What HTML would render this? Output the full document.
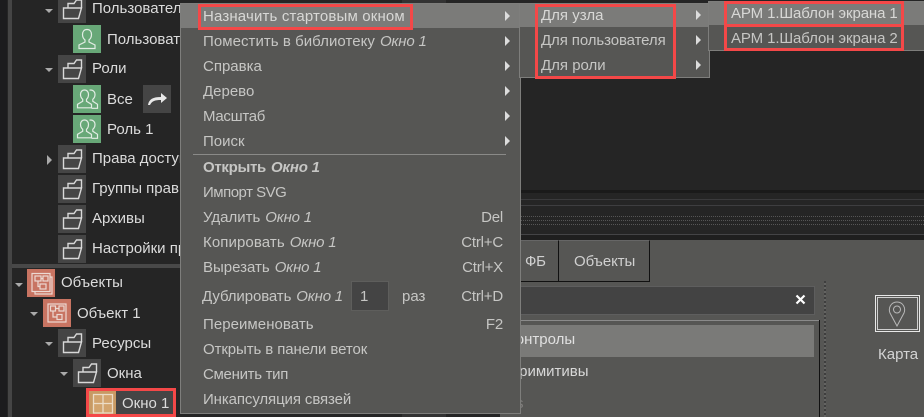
<!DOCTYPE html>
<html lang="ru"><head><meta charset="utf-8"><title>Меню</title>
<style>
html,body{margin:0;padding:0;background:#252525}
#r{position:relative;width:924px;height:417px;overflow:hidden;background:#252525;font:15px "Liberation Sans",sans-serif;color:#dcdcdc}
#r div,#r span.a,#r svg{position:absolute}
.t{white-space:nowrap;line-height:18px;height:18px;margin-top:1px}
.b{width:28px;height:28px;background:#454545}
.b svg,.g svg,.o svg,.w svg{left:0;top:0;width:28px;height:28px}
.g{width:28px;height:28px;background:#68a878}
.o{width:28px;height:28px;background:#c87462}
.m{color:#c6c6c4}
.m i{margin-left:5px;font-style:italic;letter-spacing:-.2px}
.ar{width:0;height:0;border-left:5px solid #dcdcdc;border-top:5px solid transparent;border-bottom:5px solid transparent}
.red{border:3px solid #f44848;box-sizing:border-box}
.tg{width:0;height:0;border-top:4px solid #aaa;border-left:4px solid transparent;border-right:4px solid transparent}
.tr{width:0;height:0;border-left:5px solid #aaa;border-top:5px solid transparent;border-bottom:5px solid transparent}
.k{text-align:right;width:80px;left:423px;letter-spacing:-.2px}
.d{left:520px;width:404px;height:0;border-top:1px dotted #555}
</style></head><body><div id="r">
<svg width="0" height="0" style="position:absolute"><defs>
<symbol id="f" viewBox="0 0 28 28"><path d="M5.500 23.500 V13 H23.500 L20.500 23.500 Z M10 13 V8.500 H16 L18.500 5 H23.500 V13" fill="none" stroke="#d8d8d8" stroke-width="1.400"/></symbol>
<symbol id="u" viewBox="0 0 28 28"><path d="M14 4.500 c-3 0 -4.500 2.200 -4.500 5 c0 2.600 1.300 4.500 2.500 5.500 v2 l-6 3 v3.500 h16 v-3.500 l-6 -3 v-2 c1.200 -1 2.500 -2.900 2.500 -5.500 c0 -2.800 -1.500 -5 -4.500 -5 z" fill="none" stroke="#e2ece4" stroke-width="1.200"/></symbol>
<symbol id="uu" viewBox="0 0 28 28"><path d="M11.500 5 c-2.500 0 -4 2 -4 4.500 c0 2.300 1 3.800 2.200 4.800 v2 l-5.200 3 v3.500 h14 v-3.500 l-5 -3 v-2 c1.200 -1 2 -2.500 2 -4.800 c0 -2.500 -1.500 -4.500 -4 -4.500 z M16.500 5.200 c2.800 -.8 5.500 1.200 5.500 4.300 c0 2.300 -1 3.800 -2.200 4.800 v2 l4.700 3 v4 h-6" fill="none" stroke="#e2ece4" stroke-width="1.200"/></symbol>
<symbol id="ob" viewBox="0 0 28 28"><g fill="none" stroke="#ecd9d2" stroke-width="1.200"><rect x="5" y="4.500" width="18" height="18"/><rect x="8" y="7" width="6" height="5"/><rect x="16" y="7" width="5" height="5"/><rect x="13" y="15" width="6" height="5"/><path d="M14 9.500H16M11 12V17.500H13M23 8H25V25H8V22.500"/></g></symbol>
<symbol id="ob2" viewBox="0 0 28 28"><g fill="none" stroke="#ecd9d2" stroke-width="1.200"><rect x="5" y="5" width="18" height="18"/><rect x="7.500" y="7" width="5" height="5"/><rect x="16" y="7" width="5" height="5"/><rect x="14" y="15.500" width="5" height="5"/><path d="M12.500 9.500H16M10 12V18H14"/></g></symbol>
</defs></svg>

<!-- left chrome -->
<div style="left:0;top:0;width:7px;height:417px;background:#1c1c1e"></div>
<div style="left:8px;top:0;width:4px;height:417px;background:#454545"></div>
<div style="left:12px;top:264px;width:170px;height:4px;background:#484848"></div>

<!-- tree -->
<div class="tg" style="left:45px;top:9px"></div>
<div class="b" style="left:58px;top:-5px"><svg><use href="#f"/></svg></div>
<div class="t" style="left:92px;top:-1px">Пользователи</div>
<div class="g" style="left:73px;top:25px"><svg><use href="#u"/></svg></div>
<div class="t" style="left:107px;top:30px">Пользователь</div>
<div class="tg" style="left:45px;top:68px"></div>
<div class="b" style="left:58px;top:55px"><svg><use href="#f"/></svg></div>
<div class="t" style="left:92px;top:59px">Роли</div>
<div class="g" style="left:73px;top:85px"><svg><use href="#uu"/></svg></div>
<div class="t" style="left:107px;top:90px">Все</div>
<div class="b" style="left:143px;top:85px"><svg viewBox="0 0 28 28"><path d="M5 20 C6 14 10 12 18 12 V8 L24 13 L18 18 V15 C12 15 9 16 7 20 Z" fill="#e8e8e8"/></svg></div>
<div class="g" style="left:73px;top:115px"><svg><use href="#uu"/></svg></div>
<div class="t" style="left:107px;top:120px">Роль 1</div>
<div class="tr" style="left:47px;top:155px"></div>
<div class="b" style="left:58px;top:145px"><svg><use href="#f"/></svg></div>
<div class="t" style="left:92px;top:149px">Права доступа</div>
<div class="b" style="left:58px;top:175px"><svg><use href="#f"/></svg></div>
<div class="t" style="left:92px;top:179px">Группы прав</div>
<div class="b" style="left:58px;top:205px"><svg><use href="#f"/></svg></div>
<div class="t" style="left:92px;top:209px">Архивы</div>
<div class="b" style="left:58px;top:235px"><svg><use href="#f"/></svg></div>
<div class="t" style="left:92px;top:239px">Настройки проекта</div>
<div class="tg" style="left:15px;top:283px"></div>
<div class="o" style="left:27px;top:269px"><svg><use href="#ob"/></svg></div>
<div class="t" style="left:61px;top:273px">Объекты</div>
<div class="tg" style="left:30px;top:312px"></div>
<div class="o" style="left:43px;top:299px"><svg><use href="#ob2"/></svg></div>
<div class="t" style="left:77px;top:304px">Объект 1</div>
<div class="tg" style="left:45px;top:342px"></div>
<div class="b" style="left:58px;top:329px"><svg><use href="#f"/></svg></div>
<div class="t" style="left:92px;top:334px">Ресурсы</div>
<div class="tg" style="left:60px;top:372px"></div>
<div class="b" style="left:73px;top:359px"><svg><use href="#f"/></svg></div>
<div class="t" style="left:107px;top:364px">Окна</div>
<div style="left:86px;top:388px;width:90px;height:29px;background:#454545"></div>
<div class="w" style="left:89px;top:389px;width:27px;height:28px;background:#c89a64"><svg viewBox="0 0 28 28"><path d="M4.500 5.500H23.500V24H4.500ZM14 5.500V24M4.500 14.500H23.500" fill="#d2a46e" stroke="#ecdcc6" stroke-width="1.300"/></svg></div>
<div class="t" style="left:122px;top:394px">Окно 1</div>
<div class="red" style="left:86px;top:388px;width:90px;height:29px"></div>

<!-- right dark stripes -->
<div style="left:520px;top:190px;width:404px;height:3px;background:#1a1a1a"></div>
<div style="left:520px;top:199px;width:404px;height:1px;background:#3a3a3c"></div>
<div style="left:520px;top:205px;width:404px;height:1px;background:#3e3e40"></div>
<div class="d" style="top:216px"></div>
<div class="d" style="top:220px"></div>
<div class="d" style="top:224px"></div>
<div style="left:520px;top:234px;width:404px;height:1px;background:#444446"></div>
<div style="left:520px;top:235px;width:404px;height:5px;background:#1f1f1f"></div>

<!-- bottom right panel -->
<div style="left:500px;top:240px;width:424px;height:177px;background:#565654"></div>
<div style="left:520px;top:240px;width:38px;height:40px;border-right:1px solid #111;border-bottom:1px solid #111;border-top:1px solid #666;box-sizing:content-box"></div>
<div style="left:559px;top:240px;width:90px;height:40px;border-right:1px solid #111;border-bottom:1px solid #111;border-top:1px solid #666"></div>
<div class="t" style="left:525px;top:252px;color:#d0d0d0;letter-spacing:-.3px">ФБ</div>
<div class="t" style="left:574px;top:252px;color:#d0d0d0;letter-spacing:-.1px">Объекты</div>
<div style="left:500px;top:286px;width:313px;height:27px;background:#434343;border:1px solid #5e5e5e;box-sizing:content-box"></div>
<svg style="left:795px;top:294px" width="11" height="11" viewBox="0 0 11 11"><path d="M1.500 1.500L9.500 9.500M9.500 1.500L1.500 9.500" stroke="#fff" stroke-width="2.200"/></svg>
<div style="left:500px;top:320px;width:319px;height:1px;background:#8a8a8a"></div>
<div style="left:819px;top:320px;width:1px;height:97px;background:#111"></div>
<div style="left:500px;top:325px;width:314px;height:32px;background:#7a7a78"></div>
<div class="t" style="left:509px;top:330px;color:#e0e0e0">контролы</div>
<div class="t" style="left:511px;top:362px;color:#d8d8d8">примитивы</div>
<div class="t" style="left:506px;top:394px;color:#807f7d">Bs</div>
<div style="left:824px;top:281px;width:2px;height:136px;background:repeating-linear-gradient(180deg,#3e3e3e 0 2px,#646462 2px 4px)"></div>
<div style="left:875px;top:295px;width:43px;height:35px;border:1px solid #e8e8e8"></div>
<div style="left:877px;top:297px;width:39px;height:31px;border:1px solid #d0d0d0"></div>
<svg style="left:887px;top:300px" width="20" height="27" viewBox="0 0 20 27"><path d="M10 26 L3 13 C1 8 4 2 10 2 C16 2 19 8 17 13 Z" fill="none" stroke="#b8b8b8" stroke-width="1"/><circle cx="10" cy="9.500" r="3.500" fill="none" stroke="#b8b8b8" stroke-width="1"/></svg>
<div class="t" style="left:878px;top:345px;color:#d4d4d4">Карта</div>

<!-- small bits -->
<div style="left:402px;top:0;width:44px;height:3px;background:#333"></div>
<div style="left:402px;top:414px;width:44px;height:3px;background:#333"></div>

<!-- main menu -->
<div style="left:180px;top:3px;width:339px;height:409px;background:#565654;border:1px solid #7e7e7c"></div>
<div style="left:181px;top:4px;width:339px;height:24px;background:#7b7b79"></div>
<div class="t m" style="left:203px;top:7px;color:#d8d8d6;letter-spacing:.16px">Назначить стартовым окном</div>
<div class="t m" style="left:203px;top:32px;letter-spacing:.05px">Поместить в библиотеку<i>Окно 1</i></div>
<div class="t m" style="left:203px;top:57px">Справка</div>
<div class="t m" style="left:203px;top:82px">Дерево</div>
<div class="t m" style="left:203px;top:107px;letter-spacing:-.3px">Масштаб</div>
<div class="t m" style="left:203px;top:132px">Поиск</div>
<div class="ar" style="left:505px;top:11px"></div>
<div class="ar" style="left:505px;top:36px"></div>
<div class="ar" style="left:505px;top:61px"></div>
<div class="ar" style="left:505px;top:86px"></div>
<div class="ar" style="left:505px;top:111px"></div>
<div class="ar" style="left:505px;top:136px"></div>
<div style="left:193px;top:154px;width:313px;height:1px;background:#8a8a88"></div>
<div class="t m" style="left:203px;top:158px;font-weight:bold;letter-spacing:-.3px">Открыть<i>Окно 1</i></div>
<div class="t m" style="left:203px;top:183px;letter-spacing:-.5px">Импорт SVG</div>
<div class="t m" style="left:203px;top:208px">Удалить<i>Окно 1</i></div>
<div class="t m" style="left:203px;top:233px;letter-spacing:.1px">Копировать<i>Окно 1</i></div>
<div class="t m" style="left:203px;top:258px">Вырезать<i>Окно 1</i></div>
<div class="t m" style="left:202px;top:287px;letter-spacing:-.1px">Дублировать<i>Окно 1</i></div>
<div style="left:351px;top:281px;width:36px;height:28px;background:#444;border:1px solid #5e5e5c"></div>
<div class="t m" style="left:360px;top:287px">1</div>
<div class="t m" style="left:402px;top:287px">раз</div>
<div class="t m" style="left:203px;top:315px;letter-spacing:.05px">Переименовать</div>
<div class="t m" style="left:203px;top:340px;letter-spacing:-.1px">Открыть в панели веток</div>
<div class="t m" style="left:203px;top:365px;letter-spacing:-.3px">Сменить тип</div>
<div class="t m" style="left:203px;top:390px;letter-spacing:-.1px">Инкапсуляция связей</div>
<div class="t m k" style="top:208px">Del</div>
<div class="t m k" style="top:233px">Ctrl+C</div>
<div class="t m k" style="top:258px">Ctrl+X</div>
<div class="t m k" style="top:287px">Ctrl+D</div>
<div class="t m k" style="top:315px">F2</div>
<div class="red" style="left:198px;top:4px;width:215px;height:26px"></div>

<!-- submenu 1 -->
<div style="left:519px;top:3px;width:189px;height:73px;background:#565654;border:1px solid #7e7e7c"></div>
<div style="left:520px;top:4px;width:189px;height:23px;background:#7b7b79"></div>
<div class="t m" style="left:541px;top:6px;color:#d8d8d6">Для узла</div>
<div class="t m" style="left:541px;top:31px;letter-spacing:-.1px">Для пользователя</div>
<div class="t m" style="left:541px;top:56px">Для роли</div>
<div class="ar" style="left:696px;top:10px"></div>
<div class="ar" style="left:696px;top:35px"></div>
<div class="ar" style="left:696px;top:60px"></div>
<div class="red" style="left:535px;top:4px;width:141px;height:75px"></div>

<!-- submenu 2 -->
<div style="left:708px;top:1px;width:216px;height:48px;background:#565654;border:1px solid #7e7e7c;border-right:0"></div>
<div style="left:709px;top:2px;width:215px;height:23px;background:#7b7b79"></div>
<div class="t m" style="left:731px;top:4px;color:#d8d8d6;letter-spacing:-.1px">АРМ 1.Шаблон экрана 1</div>
<div class="t m" style="left:731px;top:29px;letter-spacing:-.1px">АРМ 1.Шаблон экрана 2</div>
<div class="red" style="left:724px;top:1px;width:180px;height:26px"></div>
<div class="red" style="left:724px;top:24px;width:180px;height:27px"></div>
</div></body></html>
